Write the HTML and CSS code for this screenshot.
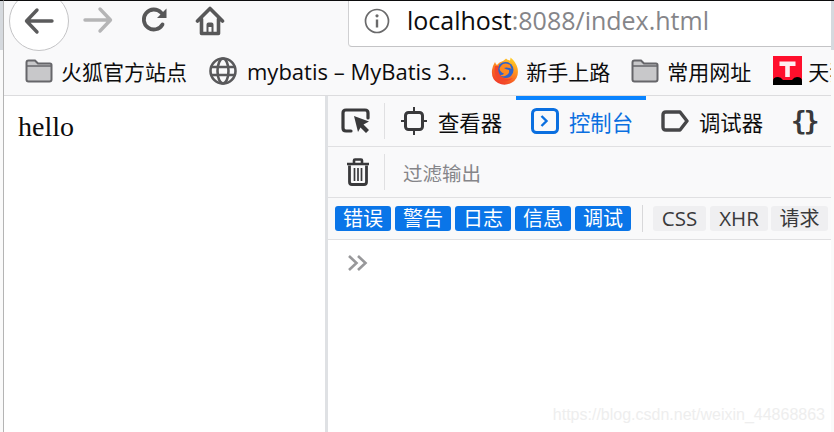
FILE: index.html
```html
<!DOCTYPE html>
<html lang="zh">
<head>
<meta charset="utf-8">
<title>hello</title>
<link rel="stylesheet" href="styles.css">
</head>
<body>
<div class="window">
  <header class="nav">
    <button class="back"><svg width="32" height="28" viewBox="0 0 32 28"><path d="M29 14H4M14 3 3.500 14 14 25" fill="none" stroke="#5b5b5c" stroke-width="3.400" stroke-linecap="round" stroke-linejoin="round"/></svg></button>
    <span class="ico forward"><svg width="32" height="28" viewBox="0 0 32 28"><path d="M3 14H28M18 3 28.500 14 18 25" fill="none" stroke="#b5b5b6" stroke-width="3.400" stroke-linecap="round" stroke-linejoin="round"/></svg></span>
    <span class="ico reload"><svg width="28" height="28" viewBox="0 0 28 28"><path d="M22.500 18.500A10 10 0 1 1 21 6.500L24 9.500" fill="none" stroke="#575758" stroke-width="3.800" stroke-linecap="round"/><path d="M26.500 2.500V12H17Z" fill="#575758"/></svg></span>
    <span class="ico home"><svg width="30" height="30" viewBox="0 0 30 30"><path d="M2.500 15 15 2.500 27.500 15M6.500 13V27.500H23.500V13" fill="none" stroke="#575758" stroke-width="3.600" stroke-linecap="round" stroke-linejoin="round"/><path d="M11.500 27V18.500Q11.500 16.500 13.500 16.500H16.500Q18.500 16.500 18.500 18.500V27H16.500V21H13.500V27Z" fill="#575758"/></svg></span>
    <div class="urlbar">
      <svg class="info" width="26" height="26" viewBox="0 0 26 26"><circle cx="13" cy="13" r="11.500" fill="none" stroke="#6a6a6b" stroke-width="1.700"/><rect x="11.800" y="11.500" width="2.400" height="8" fill="#6a6a6b"/><circle cx="13" cy="7.800" r="1.600" fill="#6a6a6b"/></svg>
      <span class="url">localhost<span class="url-dim">:8088/index.html</span></span>
    </div>
  </header>
  <nav class="bookmarks">
    <span class="bm bm-a"><svg class="folder" width="28" height="24" viewBox="0 0 28 24"><path d="M1.500 3.500Q1.500 1.500 3.500 1.500H10L13 4.500H25Q26.500 4.500 26.500 6V20.500Q26.500 22.500 24.500 22.500H3.500Q1.500 22.500 1.500 20.500Z" fill="#c8c8ca" stroke="#66666a" stroke-width="2"/><path d="M2 7H26" stroke="#66666a" stroke-width="1.500"/></svg>火狐官方站点</span>
    <span class="bm bm-b"><svg width="30" height="30" viewBox="0 0 30 30"><g fill="none" stroke="#59595b" stroke-width="2.600"><circle cx="15" cy="15" r="12.500"/><ellipse cx="15" cy="15" rx="5.500" ry="12.500"/><path d="M3 11H27M3 19H27"/></g></svg><span class="latin">mybatis – MyBatis 3...</span></span>
    <span class="bm bm-c"><svg width="28" height="28" viewBox="0 0 28 28"><defs><linearGradient id="fx" x1="0.800" y1="0" x2="0.300" y2="1"><stop offset="0" stop-color="#ffd426"/><stop offset=".45" stop-color="#ff8a1f"/><stop offset="1" stop-color="#f0382a"/></linearGradient></defs><path d="M4 5Q5 8 6 8 8 5 12 4 15 1.500 15 1.500 16 3 19 3.500 19.500 2 19.500 0.500 25 5 26.500 11 28.500 21 21 25.500 14 29.500 7 26 0 22 1 13 1.500 9 4 5Z" fill="url(#fx)"/><circle cx="14.500" cy="13" r="8" fill="#2f63c9"/><path d="M12 7Q16 5.500 19 8L20.500 12Q16 9.500 13 11 15 12.500 18 13 19 17 14 19 11 20 9 18 12 18.500 13 16.500 9 15 8.500 11.500 9.500 8.500 12 7Z" fill="#ff8a1f"/><path d="M4 9Q2 18 8 23 15 27 22 21 14 24 9 18 6 14 8 9Z" fill="#f2472a"/></svg>新手上路</span>
    <span class="bm bm-d"><svg class="folder" width="28" height="24" viewBox="0 0 28 24"><path d="M1.500 3.500Q1.500 1.500 3.500 1.500H10L13 4.500H25Q26.500 4.500 26.500 6V20.500Q26.500 22.500 24.500 22.500H3.500Q1.500 22.500 1.500 20.500Z" fill="#c8c8ca" stroke="#66666a" stroke-width="2"/><path d="M2 7H26" stroke="#66666a" stroke-width="1.500"/></svg>常用网址</span>
    <span class="bm bm-e"><svg width="29" height="29" viewBox="0 0 29 29"><rect width="29" height="29" fill="#ff0f2c"/><path d="M0 25Q0 21 5 21 8 21 10 24H19Q21 21 24 21 29 21 29 25V29H0Z" fill="#000"/><path d="M6.500 5.500H22.500V10H16.800V21H12.200V10H6.500Z" fill="#fff" opacity=".93"/></svg>天猫</span>
  </nav>
  <main class="body">
    <div class="page">hello</div>
    <section class="devtools">
      <div class="tabs">
        <span class="tool pick"><svg width="30" height="26" viewBox="0 0 30 26"><path d="M10 23H5Q2 23 2 20V5Q2 2 5 2H24Q27 2 27 5V10" fill="none" stroke="#39393b" stroke-width="3.200" stroke-linecap="round"/><path d="M13 9 28 14.500 22.500 17.500 28 23 25 26 19.500 20.500 17 25Z" fill="#39393b" transform="translate(0 -1)"/></svg></span>
        <span class="tab t-inspect"><svg width="26" height="28" viewBox="0 0 26 28"><rect x="4.500" y="5.500" width="17" height="17" rx="3" fill="none" stroke="#39393b" stroke-width="3"/><path d="M13 0V5M13 23V28M0 14H4M22 14H26" stroke="#39393b" stroke-width="2"/></svg>查看器</span>
        <span class="tab active t-console"><svg width="28" height="26" viewBox="0 0 28 26"><rect x="1.500" y="1.500" width="25" height="23" rx="4" fill="none" stroke="#0a6fe0" stroke-width="3"/><path d="M10.500 8 15.500 13 10.500 18" fill="none" stroke="#0a6fe0" stroke-width="2.400"/></svg>控制台</span>
        <span class="tab t-debug"><svg width="28" height="22" viewBox="0 0 28 22"><path d="M5 2H19L26 11 19 20H5Q2 20 2 17V5Q2 2 5 2Z" fill="none" stroke="#464648" stroke-width="3.400" stroke-linejoin="round"/></svg>调试器</span>
        <span class="braces">{}</span>
      </div>
      <div class="filter">
        <span class="trash"><svg width="24" height="28" viewBox="0 0 24 28"><path d="M1 6H23M8 5V2.500Q8 1.500 9 1.500H15Q16 1.500 16 2.500V5" fill="none" stroke="#39393b" stroke-width="2.600"/><path d="M3.500 7.500V24Q3.500 26.500 6 26.500H18Q20.500 26.500 20.500 24V7.500" fill="none" stroke="#39393b" stroke-width="2.800"/><path d="M8.500 10V23M12 10V23M15.500 10V23" stroke="#39393b" stroke-width="1.700"/></svg></span>
        <span class="filter-text">过滤输出</span>
      </div>
      <div class="chips">
        <span class="chip on">错误</span>
        <span class="chip on">警告</span>
        <span class="chip on">日志</span>
        <span class="chip on">信息</span>
        <span class="chip on">调试</span>
        <span class="chip-sep"></span>
        <span class="chip off c-css">CSS</span>
        <span class="chip off c-xhr">XHR</span>
        <span class="chip off c-req">请求</span>
      </div>
      <div class="console">
        <svg width="22" height="18" viewBox="0 0 22 18"><path d="M2 2 9.500 9 2 16M11 2 18.500 9 11 16" fill="none" stroke="#98989a" stroke-width="2.600"/></svg>
      </div>
    </section>
  </main>
  <span class="watermark">https://blog.csdn.net/weixin_44868863</span>
</div>
</body>
</html>
```
FILE: styles.css
```css
* { box-sizing: border-box; }
html, body { margin: 0; height: 100%; }
body {
  overflow: hidden;
  background: linear-gradient(#0c0c0d 1px, #d5d9de 1px, #d5d9de 50px, #fafafa 50px);
}
.window {
  width: 828px; height: 432px; margin-left: 3px; overflow: hidden; position: relative;
  display: flex; flex-direction: column;
  border-top: 1px solid #0c0c0d; border-left: 1px solid #b4b4b4;
  background: #f9f9fa;
  font-family: "Noto Sans CJK SC", sans-serif;
  color: #0c0c0d;
}
.nav {
  height: 47px; flex: none; display: flex; align-items: flex-start;
  padding-left: 5px;
}
.back {
  width: 60px; height: 60px; margin-top: -10px; padding: 0; flex: none;
  border: 1px solid #c4c4c6; border-radius: 50%; background: #fff;
  display: flex; align-items: center; justify-content: center;
}
.ico { display: flex; flex: none; }
.forward { margin: 5px 0 0 13px; }
.reload { margin: 5px 0 0 26px; }
.home { margin: 5px 0 0 27px; }
.urlbar {
  margin-left: 123px; flex: 1; height: 46px;
  display: flex; align-items: center; padding: 0 0 6px 15px;
  background: #fff;
  border-left: 1px solid #d0d0d2; border-bottom: 1px solid #c4c4c6;
  border-bottom-left-radius: 4px;
}
.url {
  margin-left: 17px;
  font: 25px/1 "Open Sans", sans-serif; color: #0c0c0d;
}
.url-dim { color: #858589; }
.bookmarks {
  height: 48px; flex: none; display: flex; align-items: center;
  border-bottom: 1px solid #dcdcde; padding-bottom: 2px;
  font-size: 21px; white-space: nowrap; overflow: hidden;
}
.bm { display: flex; align-items: center; gap: 8px; flex: none; }
.bm-a { margin-left: 21px; }
.bm-b { margin-left: 21px; gap: 9px; }
.bm-c { margin-left: 24px; gap: 7px; }
.bm-d { margin-left: 21px; }
.bm-e { margin-left: 22px; gap: 6px; }
.latin { font: 22px/1 "Open Sans", sans-serif; }
.body { flex: 1; min-height: 0; display: flex; }
.page {
  width: 324px; flex: none; background: #fff;
  border-right: 3px solid #dfe1e4;
  padding: 14px 0 0 14px;
  font: 28px/34px "Liberation Serif", serif;
}
.devtools { flex: 1; min-width: 0; display: flex; flex-direction: column; background: #fff; }
.tabs {
  height: 51px; flex: none; display: flex; align-items: center;
  background: #f9f9fa; border-bottom: 1px solid #e0e0e2;
  font-size: 21.330px; white-space: nowrap; overflow: hidden;
}
.tool { width: 57px; height: 36px; flex: none; display: flex; align-items: center; padding-left: 13px; border-right: 1px solid #e0e0e2; }
.tab { display: flex; align-items: center; gap: 11px; flex: none; height: 51px; position: relative; }
.t-inspect { margin-left: 16px; }
.t-console { margin-left: 29px; width: 115px; gap: 10px; color: #0a6fe0; }
.t-console::before {
  content: ""; position: absolute; left: -15px; right: 0; top: 0; height: 4px; background: #0a84ff;
}
.t-debug { margin-left: 15px; gap: 10px; }
.braces { margin-left: 28px; font: bold 26px/1 "DejaVu Sans Mono", monospace; letter-spacing: -3px; color: #39393b; }
.filter {
  height: 51px; flex: none; display: flex; align-items: center;
  background: #f9f9fa; border-bottom: 1px solid #e0e0e2;
}
.trash { width: 57px; height: 36px; flex: none; display: flex; align-items: center; justify-content: center; border-right: 1px solid #e0e0e2; padding-left: 4px; }
.filter-text { margin-left: 18px; font-size: 19.500px; color: #858589; }
.chips {
  height: 42px; flex: none; display: flex; align-items: center; gap: 4px;
  padding: 0 0 1px 7px; background: #f9f9fa; border-bottom: 1px solid #e0e0e2;
  white-space: nowrap; overflow: hidden;
}
.chip {
  height: 25px; width: 56px; flex: none; border-radius: 3px;
  display: flex; align-items: center; justify-content: center;
  font-size: 20px; line-height: 1;
}
.chip.on { background: #0a75e8; color: #fff; }
.chip.off { background: #efeff1; color: #39393b; }
.c-css { width: 53px; font: 20.500px/1 "Open Sans", sans-serif; }
.c-xhr { width: 58px; font: 20.500px/1 "Open Sans", sans-serif; }
.c-req { width: 57px; margin-left: -1px; }
.chip-sep { width: 1px; height: 27px; background: #d8d8da; margin: 0 6px 0 7px; flex: none; }
.console { flex: 1; background: #fff; padding: 13px 0 0 19px; }
.watermark {
  position: absolute; right: 6px; bottom: 9px;
  font: 16px/1 "Liberation Sans", sans-serif; color: #eeeeee; white-space: nowrap;
}
```
